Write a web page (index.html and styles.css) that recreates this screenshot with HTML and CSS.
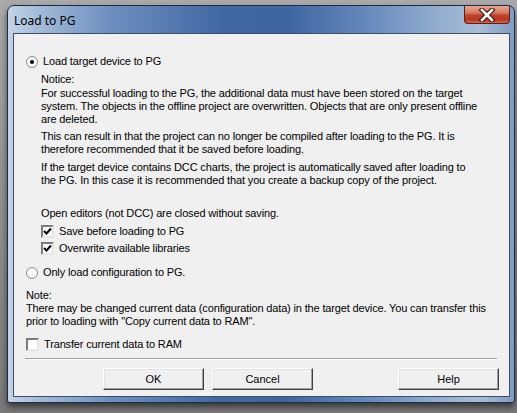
FILE: index.html
```html
<!DOCTYPE html>
<html>
<head>
<meta charset="utf-8">
<title>Load to PG</title>
<link rel="stylesheet" href="styles.css">
</head>
<body>
<div class="window">
  <div class="titlebar">
    <span class="title">Load to PG</span>
    <div class="close">
      <svg width="20" height="14" viewBox="0 0 20 14">
        <path d="M5 2 L15 12 M15 2 L5 12" stroke="#4a1a12" stroke-width="5" stroke-linecap="square"/>
        <path d="M5 2 L15 12 M15 2 L5 12" stroke="#ffffff" stroke-width="2.6" stroke-linecap="square"/>
      </svg>
    </div>
  </div>
  <div class="client">
    <div class="opt first">
      <span class="radio on"></span><span>Load target device to PG</span>
    </div>
    <div class="indent">
      <p class="para notice">Notice:</p>
      <p class="para">For successful loading to the PG, the additional data must have been stored on the target<br>system. The objects in the offline project are overwritten. Objects that are only present offline<br>are deleted.</p>
      <p class="para p2">This can result in that the project can no longer be compiled after loading to the PG. It is<br>therefore recommended that it be saved before loading.</p>
      <p class="para p3">If the target device contains DCC charts, the project is automatically saved after loading to<br>the PG. In this case it is recommended that you create a backup copy of the project.</p>
      <p class="para p4">Open editors (not DCC) are closed without saving.</p>
      <div class="opt chk1">
        <span class="check on"><svg width="9" height="9" viewBox="0 0 9 9"><path d="M1 4 L3.5 6.5 L8 1.5" stroke="#000" stroke-width="2" fill="none"/></svg></span><span class="chklabel">Save before loading to PG</span>
      </div>
      <div class="opt chk2">
        <span class="check on"><svg width="9" height="9" viewBox="0 0 9 9"><path d="M1 4 L3.5 6.5 L8 1.5" stroke="#000" stroke-width="2" fill="none"/></svg></span><span class="chklabel">Overwrite available libraries</span>
      </div>
    </div>
    <div class="opt second">
      <span class="radio"></span><span>Only load configuration to PG.</span>
    </div>
    <p class="para note">Note:<br>There may be changed current data (configuration data) in the target device. You can transfer this<br>prior to loading with "Copy current data to RAM".</p>
    <div class="opt transfer">
      <span class="check"></span><span class="tlabel">Transfer current data to RAM</span>
    </div>
    <div class="sep"></div>
    <div class="buttons">
      <button class="btn ok">OK</button>
      <button class="btn">Cancel</button>
      <button class="btn help">Help</button>
    </div>
  </div>
</div>
</body>
</html>
```

FILE: styles.css
```css
html, body {
  margin: 0;
  padding: 0;
}
body {
  width: 517px;
  height: 413px;
  overflow: hidden;
  background: linear-gradient(180deg, #a9a9a9 0%, #8c8c8c 60%, #7a7a7a 100%);
  font-family: "Liberation Sans", Arial, sans-serif;
  font-size: 11px;
  letter-spacing: -0.15px;
  color: #000;
}
.window {
  margin: 5px 0 0 7px;
  width: 497px;
  padding: 0 4px 5px 5px;
  border: 1px solid #1f2d42;
  border-radius: 7px 7px 3px 3px;
  background:
    linear-gradient(90deg, #c4d4e8 0%, #a3bbd9 6%, #6e90c0 20%, #3f68a4 42%, #3d66a2 55%, #6287bb 70%, #93adcf 85%, #a8bdd9 93%, #7f9cc4 100%);
  box-shadow: 0 4px 6px rgba(0, 0, 0, 0.55);
}
.titlebar {
  height: 27px;
  display: flex;
  align-items: center;
  justify-content: space-between;
  padding-left: 1px;
}
.title {
  font-family: "Noto Sans", "Open Sans", sans-serif;
  font-size: 12px;
  letter-spacing: 0;
  color: #000;
  padding-top: 1px;
}
.close {
  align-self: flex-start;
  width: 44px;
  height: 17px;
  margin-right: 0;
  border: 1px solid #5c2016;
  border-top: none;
  border-radius: 0 0 4px 4px;
  background: linear-gradient(180deg, #e8a795 0%, #d77a62 40%, #c0412a 55%, #b8381f 80%, #d2664a 100%);
  display: flex;
  align-items: center;
  justify-content: center;
}
.client {
  background: #f0f0f0;
  border: 1px solid #3b4f6b;
  padding: 21px 10px 6px 12px;
}
.opt {
  display: flex;
  align-items: center;
  height: 13px;
  line-height: 13px;
  white-space: nowrap;
}
.radio {
  width: 10px;
  height: 10px;
  border-radius: 50%;
  border: 1px solid #8d8d8d;
  background: radial-gradient(circle, #ffffff 55%, #e4e4e4 100%);
  margin-right: 5px;
  position: relative;
  flex: none;
}
.radio.on::after {
  content: "";
  position: absolute;
  left: 3px;
  top: 3px;
  width: 4px;
  height: 4px;
  border-radius: 50%;
  background: #000;
}
.check {
  width: 9px;
  height: 9px;
  flex: none;
  background: #fff;
  border-top: 2px solid #7b7b7b;
  border-left: 2px solid #7b7b7b;
  border-right: 2px solid #e6e6e6;
  border-bottom: 2px solid #e6e6e6;
  margin-right: 5px;
  display: flex;
  align-items: center;
  justify-content: center;
}
.check svg {
  display: block;
}
.indent {
  margin-left: 15px;
}
.para {
  margin: 0;
  line-height: 13px;
  white-space: nowrap;
}
.notice {
  margin-top: 5px;
  margin-bottom: 1px;
}
.p2 {
  margin-top: 4px;
}
.p3 {
  margin-top: 5px;
}
.p4 {
  margin-top: 20px;
}
.chk1 {
  margin-top: 5px;
}
.chk2 {
  margin-top: 4px;
}
.second {
  margin-top: 11px;
}
.note {
  margin-top: 10px;
}
.transfer {
  margin-top: 10px;
}
.tlabel {
  margin-left: 0;
}
.sep {
  margin: 7px 2px 0 -1px;
  height: 0;
  border-top: 1px solid #a0a0a0;
  border-bottom: 1px solid #ffffff;
}
.buttons {
  display: flex;
  margin-top: 8px;
  gap: 8px;
}
.btn {
  width: 101px;
  height: 22px;
  padding: 0;
  font-family: "Liberation Sans", Arial, sans-serif;
  font-size: 11px;
  color: #000;
  background: #f0f0f0;
  border-style: solid;
  border-width: 1px;
  border-color: #ffffff #404040 #404040 #ffffff;
  box-shadow: inset -1px -1px 0 #a0a0a0, inset 1px 1px 0 #e3e3e3;
}
.ok {
  margin-left: 77px;
}
.help {
  margin-left: auto;
}
```
